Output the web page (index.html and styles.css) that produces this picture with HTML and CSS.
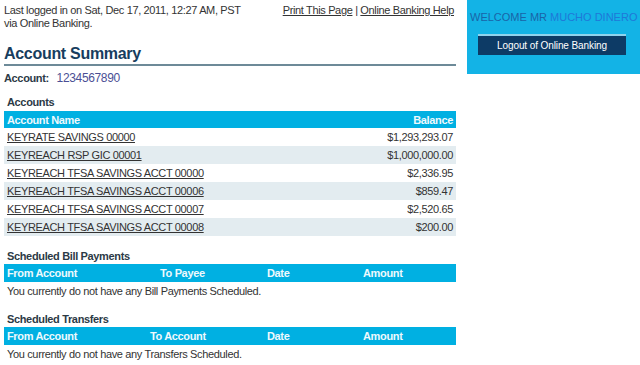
FILE: index.html
```html
<!DOCTYPE html>
<html lang="en">
<head>
    <meta charset="UTF-8">
    <title>Account Summary</title>
    <link rel="stylesheet" href="styles.css">
</head>
<body>
    <div class="page">
        <div class="main">
            <!-- Top bar -->
            <div class="top">
                <p class="last-login">Last logged in on Sat, Dec 17, 2011, 12:27 AM, PST<br>via Online Banking.</p>
                <p class="top-links"><a href="#">Print This Page</a> | <a href="#">Online Banking Help</a></p>
            </div>

            <h1>Account Summary</h1>
            <p class="account-line"><strong>Account:</strong> <span class="account-no">1234567890</span></p>

            <!-- Accounts -->
            <h3 class="first">Accounts</h3>
            <table class="grid">
                <thead>
                    <tr>
                        <th>Account Name</th>
                        <th class="num">Balance</th>
                    </tr>
                </thead>
                <tbody>
                    <tr><td><a href="#">KEYRATE SAVINGS 00000</a></td><td class="num">$1,293,293.07</td></tr>
                    <tr><td><a href="#">KEYREACH RSP GIC 00001</a></td><td class="num">$1,000,000.00</td></tr>
                    <tr><td><a href="#">KEYREACH TFSA SAVINGS ACCT 00000</a></td><td class="num">$2,336.95</td></tr>
                    <tr><td><a href="#">KEYREACH TFSA SAVINGS ACCT 00006</a></td><td class="num">$859.47</td></tr>
                    <tr><td><a href="#">KEYREACH TFSA SAVINGS ACCT 00007</a></td><td class="num">$2,520.65</td></tr>
                    <tr><td><a href="#">KEYREACH TFSA SAVINGS ACCT 00008</a></td><td class="num">$200.00</td></tr>
                </tbody>
            </table>

            <!-- Bill payments -->
            <h3>Scheduled Bill Payments</h3>
            <table class="grid sched">
                <thead>
                    <tr>
                        <th class="c1">From Account</th>
                        <th class="c2">To Payee</th>
                        <th class="c3">Date</th>
                        <th>Amount</th>
                    </tr>
                </thead>
            </table>
            <p class="empty">You currently do not have any Bill Payments Scheduled.</p>

            <!-- Transfers -->
            <h3>Scheduled Transfers</h3>
            <table class="grid sched">
                <thead>
                    <tr>
                        <th class="c1b">From Account</th>
                        <th class="c2b">To Account</th>
                        <th class="c3">Date</th>
                        <th>Amount</th>
                    </tr>
                </thead>
            </table>
            <p class="empty">You currently do not have any Transfers Scheduled.</p>
        </div>

        <div class="welcome">
            <p class="welcome-name">WELCOME MR <span>MUCHO DINERO</span></p>
            <button class="logout">Logout of Online Banking</button>
        </div>
    </div>
</body>
</html>
```

FILE: styles.css
```css
* {
    margin: 0;
    padding: 0;
    box-sizing: border-box;
}

body {
    font-family: 'Liberation Sans', Arial, sans-serif;
    font-size: 11px;
    letter-spacing: -0.35px;
    color: #333;
    background-color: #fff;
}

a {
    color: #333;
}

.page {
    display: flex;
    align-items: flex-start;
}

.main {
    width: 452px;
    margin-left: 4px;
    padding-top: 4px;
}

/* Top bar */
.top {
    display: flex;
    justify-content: space-between;
    line-height: 13px;
}

.top-links {
    margin-right: 2px;
}

h1 {
    font-size: 16px;
    letter-spacing: -0.3px;
    color: #173d5e;
    margin-top: 14px;
    border-bottom: 2px solid #6d8a98;
    line-height: 20px;
}

.account-line {
    margin-top: 5px;
}

.account-line strong {
    color: #2c3a46;
    margin-right: 5px;
}

.account-no {
    color: #4b4f95;
    font-size: 12px;
}

h3 {
    font-size: 11px;
    color: #2c3a46;
    margin: 14px 0 2px 3px;
}

h3.first {
    margin: 11px 0 3px 3px;
}

/* Tables */
.grid {
    width: 100%;
    border-collapse: collapse;
}

.grid th {
    background-color: #00b0e2;
    color: #eef9fd;
    text-align: left;
    font-size: 11px;
    height: 17px;
    padding: 0 3px;
}

.grid td {
    height: 18px;
    padding: 0 3px;
}

.grid tbody tr:nth-child(even) td {
    background-color: #e3ecf0;
}

.grid .num {
    text-align: right;
}

.sched .c1 { width: 153px; }
.sched .c2 { width: 107px; }
.sched .c3 { width: 96px; }
.sched .c1b { width: 143px; }
.sched .c2b { width: 117px; }

.sched th {
    height: 18px;
}

.empty {
    padding: 3px 3px 0;
}

.empty + h3 {
    margin-top: 16px;
}

/* Welcome panel */
.welcome {
    margin-left: 11px;
    width: 173px;
    height: 74px;
    background-color: #13b3e6;
    padding: 11px 0 0 3px;
}

.welcome-name {
    font-size: 11px;
    letter-spacing: 0;
    white-space: nowrap;
    color: #1a64a8;
}

.welcome-name span {
    color: #1f78d8;
}

.logout {
    display: block;
    margin: 11px 0 0 8px;
    width: 148px;
    height: 21px;
    background-color: #0d3b66;
    color: #fff;
    font-family: 'Liberation Sans', Arial, sans-serif;
    font-size: 10px;
    letter-spacing: -0.1px;
    border: none;
    border-top: 2px solid #8fd3ee;
    cursor: pointer;
}
```
